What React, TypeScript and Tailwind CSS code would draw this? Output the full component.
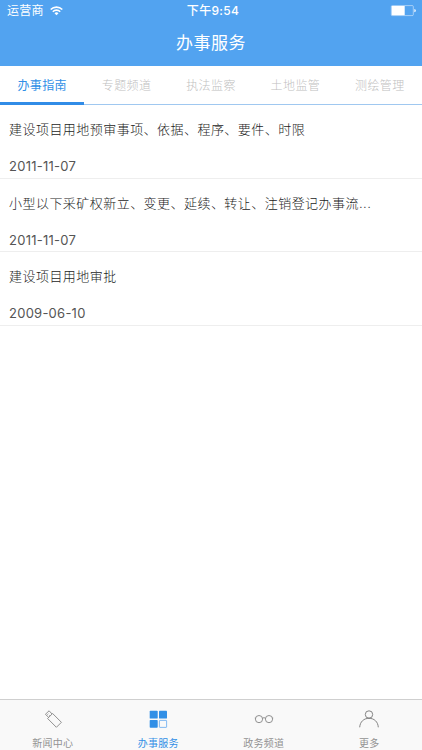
import React from 'react';

const tabs = ['办事指南', '专题频道', '执法监察', '土地监管', '测绘管理'];

const articles = [
  { title: '建设项目用地预审事项、依据、程序、要件、时限', date: '2011-11-07' },
  { title: '小型以下采矿权新立、变更、延续、转让、注销登记办事流...', date: '2011-11-07' },
  { title: '建设项目用地审批', date: '2009-06-10' },
];

function WifiIcon() {
  return (
    <svg width="13" height="10" viewBox="0 0 13 10" fill="none" stroke="white" strokeWidth="1.6">
      <path d="M.7 3.5a8.2 8.2 0 0 1 11.6 0M2.8 5.7a5.2 5.2 0 0 1 7.4 0" />
      <path d="M6.5 9.3 4.5 7.3a2.8 2.8 0 0 1 4 0z" fill="white" stroke="none" />
    </svg>
  );
}

function BatteryIcon() {
  return (
    <svg width="26" height="12" viewBox="0 0 26 12" fill="none">
      <rect x="1.3" y=".6" width="22" height="10" rx="1" stroke="white" strokeOpacity=".6" strokeWidth=".8" />
      <rect x="1.7" y="1" width="13" height="9.2" fill="white" />
      <path d="M24.4 4.1q1.4 .3 1.4 1.6t-1.4 1.6z" fill="white" />
    </svg>
  );
}

function UsbIcon() {
  return (
    <svg width="20" height="20" viewBox="0 0 20 20" fill="none" stroke="#858585" strokeWidth=".9" strokeLinejoin="round">
      <path d="m9.6 4.5 8.8 8.8-5 5-8.8-8.8z" />
      <path d="M5.7 8.4 2.4 5.3l3.7-3.5 3 3.2" />
      <path d="m4.4 5.6.9-.8m.8 2.4.9-.8" />
    </svg>
  );
}

function GridIcon() {
  return (
    <svg width="20" height="20" viewBox="0 0 20 20" fill="#318fe6">
      <rect x="1.7" y="1.8" width="8" height="7.8" rx=".7" />
      <rect x="11" y="1.8" width="8" height="7.8" rx=".7" />
      <rect x="1.7" y="11" width="8" height="7.8" rx=".7" />
      <rect x="11.4" y="11.4" width="7.2" height="7" rx=".5" fill="none" stroke="#64aaf0" strokeWidth=".8" />
    </svg>
  );
}

function GlassesIcon() {
  return (
    <svg width="20" height="20" viewBox="0 0 20 20" fill="none" stroke="#858585" strokeWidth=".9">
      <circle cx="5" cy="10.1" r="3.6" />
      <circle cx="15" cy="10.1" r="3.6" />
      <path d="M8.4 9.2q1.6-1 3.2 0M1.6 9H.8m17.6 0h.8" />
    </svg>
  );
}

function PersonIcon() {
  return (
    <svg width="20" height="20" viewBox="0 0 20 20" fill="none" stroke="#777" strokeWidth=".9">
      <circle cx="10" cy="5.5" r="3.7" />
      <path d="M.7 18.3C1 12.8 4.8 9.3 10 9.3s9 3.5 9.3 9" />
    </svg>
  );
}

const navigation = [
  { label: '新闻中心', icon: <UsbIcon />, active: false },
  { label: '办事服务', icon: <GridIcon />, active: true },
  { label: '政务频道', icon: <GlassesIcon />, active: false },
  { label: '更多', icon: <PersonIcon />, active: false },
];

export default function App() {
  return (
    <div className="flex h-[750px] w-[422px] flex-col overflow-hidden bg-white font-['Inter','Noto_Sans_CJK_SC',sans-serif] whitespace-nowrap">
      <header className="h-[66px] shrink-0 bg-[#52a3f0] text-white">
        <div className="grid h-[22px] grid-cols-3 items-center pl-[7px] pr-[6px] text-[12px] leading-[22px]">
          <div className="flex items-center gap-[6px]">
            <span className="tracking-[0.2px]">运营商</span>
            <WifiIcon />
          </div>
          <span className="pl-[3px] text-center font-medium tracking-[0.3px]">下午9:54</span>
          <div className="flex justify-end"><BatteryIcon /></div>
        </div>
        <h1 className="text-center text-[17px] font-normal leading-[43px] tracking-[0.5px]">办事服务</h1>
      </header>

      <nav className="grid h-[39px] shrink-0 grid-cols-5 border-b border-[#a0c8f0]">
        {tabs.map((tab, index) => (
          <button
            key={tab}
            className={index === 0
              ? 'h-[39px] border-b-[3px] border-[#318ce7] pt-[2px] text-[12px] leading-[36px] tracking-[0.4px] text-[#318fe6]'
              : 'h-[38px] pt-px text-[12px] font-light leading-[36px] tracking-[0.4px] text-[#bfbfbf]'}
          >
            {tab}
          </button>
        ))}
      </nav>

      <main className="flex-1">
        {articles.map((article) => (
          <article key={article.title} className="h-[73.6px] border-b border-[#eeeeee] px-[9px] text-[13px]">
            <h2 className="pt-[14px] font-light leading-[20px] tracking-[0.46px] text-[#1c1c1c]">{article.title}</h2>
            <p className="pt-[17px] leading-[20px] tracking-[0.25px] text-[#555]">{article.date}</p>
          </article>
        ))}
      </main>

      <footer className="grid h-[51px] shrink-0 grid-cols-4 border-t border-[#cfcfcf] bg-[#f9f9f9]">
        {navigation.map((item) => (
          <button
            key={item.label}
            className={item.active
              ? 'flex flex-col items-center pt-[9px] text-[10px] text-[#318fe6]'
              : 'flex flex-col items-center pt-[9px] text-[10px] text-[#929292]'}
          >
            {item.icon}
            <span className="pt-[7px] leading-[14px] tracking-[0.3px]">{item.label}</span>
          </button>
        ))}
      </footer>
    </div>
  );
}
